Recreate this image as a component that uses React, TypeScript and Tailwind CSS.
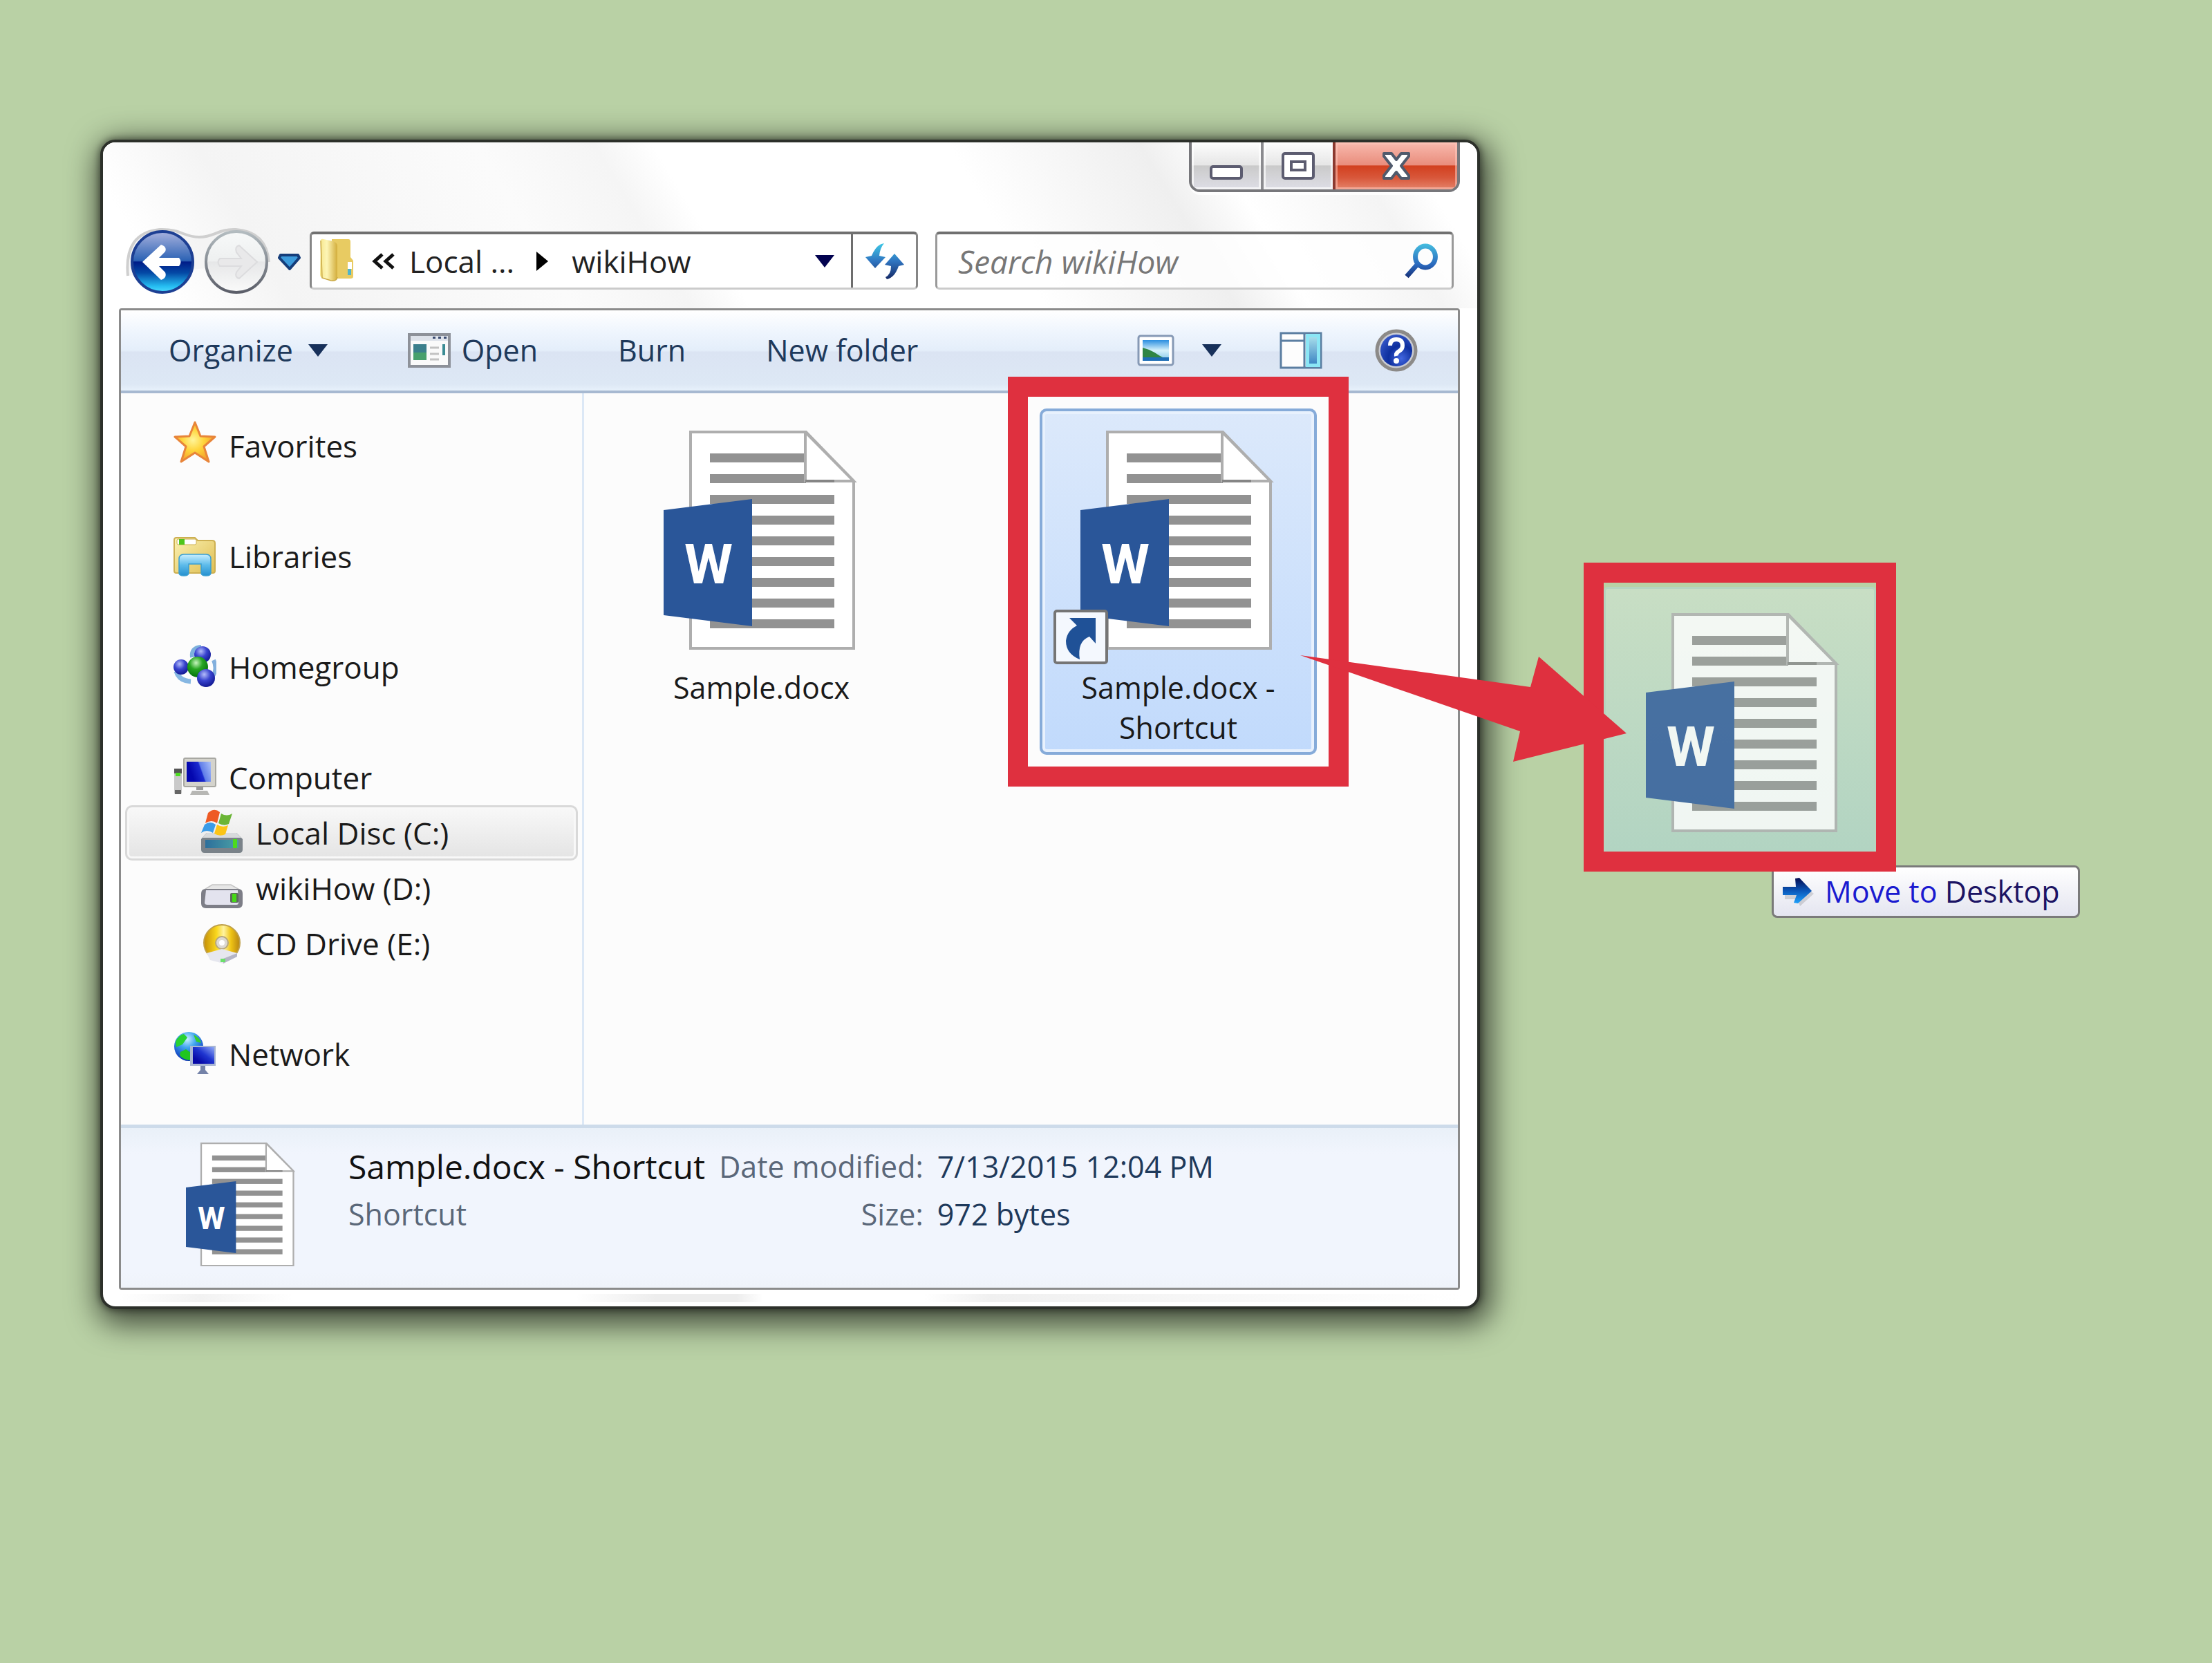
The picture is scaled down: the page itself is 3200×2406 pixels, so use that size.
import React from "react";

const WordIcon = ({ className }: { className: string }) => (
  <svg viewBox="0 0 283 317" className={className}>
    <path d="M39 2H206L275 73V315H39Z" fill="#fff" stroke="#aeaeae" strokeWidth="4" />
    {[33, 63].map((y) => (
      <rect key={y} x="67" y={y} width="139" height="13" fill="#929292" />
    ))}
    {[93, 123, 153, 183, 213, 243, 273].map((y) => (
      <rect key={y} x="67" y={y} width="180" height="13" fill="#929292" />
    ))}
    <path d="M205 2V73H275Z" fill="#fff" stroke="#aeaeae" strokeWidth="4" />
    <path d="M205 73H247" stroke="#858585" strokeWidth="4" />
    <path d="M0 115L128 99V283L0 267Z" fill="#2a5699" />
    <text
      x="65"
      y="221"
      textAnchor="middle"
      fill="#fff"
      fontFamily="Roboto, sans-serif"
      fontWeight="700"
      fontSize="80">
      W
    </text>
  </svg>
);

const Triangle = ({ color }: { color: string }) => (
  <svg viewBox="0 0 28 18" className="w-7 shrink-0">
    <path d="M0 0H28L14 18Z" fill={color} />
  </svg>
);

const StarIcon = () => (
  <svg viewBox="0 0 62 72" className="w-[62px] shrink-0">
    <defs>
      <radialGradient id="star" cx="45%" cy="45%" r="60%">
        <stop offset="0" stopColor="#fff59a" />
        <stop offset="0.45" stopColor="#ffd53c" />
        <stop offset="1" stopColor="#f29a26" />
      </radialGradient>
    </defs>
    <path
      d="M31 2L39 22L60 23L44 37L51 59L31 46L11 59L18 37L2 23L23 22Z"
      fill="url(#star)"
      stroke="#e8853a"
      strokeWidth="3"
      strokeLinejoin="round"
    />
  </svg>
);

const LibrariesIcon = () => (
  <svg viewBox="0 0 62 72" className="w-[62px] shrink-0">
    <defs>
      <linearGradient id="lib" x1="0" y1="0" x2="1" y2="1">
        <stop offset="0" stopColor="#fbf2b4" />
        <stop offset="1" stopColor="#dfbe52" />
      </linearGradient>
      <linearGradient id="libBlue" x1="0" y1="0" x2="0" y2="1">
        <stop offset="0" stopColor="#c9efff" />
        <stop offset="0.5" stopColor="#5dbbea" />
        <stop offset="1" stopColor="#2590cf" />
      </linearGradient>
    </defs>
    <path
      d="M4 9H31L35 13H56Q60 13 60 17V57Q60 60 57 60H4Q1 60 1 57V12Q1 9 4 9Z"
      fill="url(#lib)"
      stroke="#cdb052"
      strokeWidth="2"
    />
    <rect x="5" y="11" width="28" height="8" rx="2" fill="#fff" stroke="#cdb052" />
    <rect x="8" y="11" width="8" height="8" fill="#4fc61c" />
    <path
      d="M8 60V40Q8 33 15 33H47Q54 33 54 40V60Q54 64 47 64Q40 64 40 60V47H22V60Q22 64 15 64Q8 64 8 60Z"
      fill="url(#libBlue)"
      stroke="#3a9fd2"
      strokeWidth="1.5"
    />
  </svg>
);

const HomegroupIcon = () => (
  <svg viewBox="0 0 62 72" className="w-[62px] shrink-0">
    <defs>
      <radialGradient id="ballBlue" cx="40%" cy="30%" r="70%">
        <stop offset="0" stopColor="#b4bdfa" />
        <stop offset="0.5" stopColor="#3944cf" />
        <stop offset="1" stopColor="#131a94" />
      </radialGradient>
      <radialGradient id="ballGreen" cx="42%" cy="30%" r="70%">
        <stop offset="0" stopColor="#c6f5bd" />
        <stop offset="0.45" stopColor="#26a521" />
        <stop offset="1" stopColor="#04700a" />
      </radialGradient>
    </defs>
    <path d="M27 22Q25 8 40 7" fill="none" stroke="#7db1dc" strokeWidth="6" />
    <path d="M58 26Q64 40 56 50" fill="none" stroke="#83b0dd" strokeWidth="6" />
    <path d="M4 42Q8 56 25 57" fill="none" stroke="#86b7e2" strokeWidth="7" />
    <circle cx="42" cy="18" r="12" fill="url(#ballBlue)" />
    <circle cx="11" cy="36" r="11" fill="url(#ballBlue)" />
    <circle cx="35" cy="36" r="15" fill="url(#ballGreen)" />
    <circle cx="47" cy="52" r="13" fill="url(#ballBlue)" />
  </svg>
);

const ComputerIcon = () => (
  <svg viewBox="0 0 62 72" className="w-[62px] shrink-0">
    <defs>
      <linearGradient id="screen" x1="0" y1="0.3" x2="1" y2="0">
        <stop offset="0.1" stopColor="#0407ae" />
        <stop offset="0.5" stopColor="#1c2cd0" />
        <stop offset="0.55" stopColor="#5f7ce8" />
        <stop offset="1" stopColor="#a9c0fa" />
      </linearGradient>
    </defs>
    <rect x="1" y="23" width="11" height="37" rx="2" fill="#c9c9c9" />
    <rect x="1" y="23" width="11" height="7" fill="#555" />
    <rect x="3" y="29" width="7" height="5" fill="#4ddc21" />
    <rect x="2" y="54" width="9" height="6" fill="#666" />
    <rect x="15" y="8" width="46" height="41" rx="2" fill="#d4d3cc" stroke="#a8a8a2" strokeWidth="2" />
    <rect x="19" y="13" width="35" height="29" fill="url(#screen)" />
    <path d="M33 49H43V54H33Z" fill="#9a9a9a" />
    <path d="M27 55H49L52 61H24Z" fill="#b7b7b4" />
  </svg>
);

const LocalDiscIcon = () => (
  <svg viewBox="0 0 62 72" className="w-[62px] shrink-0">
    <defs>
      <linearGradient id="discFace" x1="0" y1="0" x2="1" y2="0">
        <stop offset="0" stopColor="#2c6f9c" />
        <stop offset="1" stopColor="#4ba0a4" />
      </linearGradient>
    </defs>
    <path d="M9 36H52L61 45V60Q61 65 56 65H6Q1 65 1 60V45Z" fill="#7a8289" />
    <path d="M9 36H52L59 43H3Z" fill="#d8dadc" />
    <rect x="7" y="46" width="48" height="12" fill="url(#discFace)" />
    <rect x="47" y="45" width="6" height="13" fill="#4ddb1e" />
    <path d="M11 7Q20 -1 28 6L24 22Q16 16 7 22Z" fill="#ee5a24" />
    <path d="M30 8Q38 13 46 8L41 23Q34 27 26 22Z" fill="#6bb536" />
    <path d="M6 24Q14 18 22 24L18 36Q9 30 1 36Z" fill="#3a9ce8" />
    <path d="M24 24Q32 29 40 25L36 38Q28 42 20 37Z" fill="#fcc416" />
  </svg>
);

const DriveIcon = () => (
  <svg viewBox="0 0 62 72" className="w-[62px] shrink-0">
    <path d="M17 31H44L58 39H4Z" fill="#e6e6e6" stroke="#c4c4c4" strokeWidth="1.5" />
    <path d="M8 37H54Q61 37 61 44V58Q61 65 54 65H8Q1 65 1 58V44Q1 37 8 37Z" fill="#7d7e87" />
    <path d="M8 39H54L55 57Q55 60 52 60H10Q6 60 6 57Z" fill="#e3e3ee" />
    <rect x="43" y="43" width="12" height="14" rx="2" fill="#5c6a5c" />
    <rect x="46" y="44" width="6" height="12" fill="#45d916" />
  </svg>
);

const CdIcon = () => (
  <svg viewBox="0 0 62 72" className="w-[62px] shrink-0">
    <defs>
      <linearGradient id="cd" x1="0" y1="0" x2="1" y2="0">
        <stop offset="0" stopColor="#c58f08" />
        <stop offset="0.35" stopColor="#f9d71c" />
        <stop offset="0.55" stopColor="#fff3a0" />
        <stop offset="0.75" stopColor="#efc414" />
        <stop offset="1" stopColor="#b78410" />
      </linearGradient>
    </defs>
    <circle cx="31" cy="35" r="26" fill="url(#cd)" stroke="#bfa04a" strokeWidth="2" />
    <circle cx="31" cy="35" r="9" fill="#ddd9d2" stroke="#b6a77b" strokeWidth="2" />
    <circle cx="31" cy="35" r="4" fill="#fff" />
    <path d="M9 50L31 44L53 50V55L33 65L14 60Z" fill="#e6e7ef" />
    <path d="M33 58L53 50V55L33 65Z" fill="#b4b5c6" />
    <rect x="29" y="58" width="7" height="5" fill="#6be06b" />
  </svg>
);

const NetworkIcon = () => (
  <svg viewBox="0 0 62 72" className="w-[62px] shrink-0">
    <defs>
      <radialGradient id="globe" cx="45%" cy="25%" r="75%">
        <stop offset="0" stopColor="#c8f0ff" />
        <stop offset="0.4" stopColor="#3ea4ee" />
        <stop offset="1" stopColor="#0a2fb8" />
      </radialGradient>
      <linearGradient id="netScreen" x1="0" y1="1" x2="1" y2="0">
        <stop offset="0.2" stopColor="#0608a6" />
        <stop offset="0.55" stopColor="#1f35d0" />
        <stop offset="1" stopColor="#8fa9f5" />
      </linearGradient>
    </defs>
    <circle cx="22" cy="25" r="21" fill="url(#globe)" />
    <path d="M3 18Q8 8 15 7L20 12L13 22L4 26Z" fill="#27d232" />
    <path d="M29 8Q38 12 40 20L33 18Z" fill="#33cf2c" />
    <path d="M10 33L18 29L25 34V45Q15 45 9 38Z" fill="#20c61f" />
    <path d="M24 24H61V53H24Z" fill="#a9b6d2" />
    <rect x="28" y="26" width="31" height="24" fill="url(#netScreen)" />
    <path d="M39 53H46V59L51 65H34L39 59Z" fill="#7482a8" />
  </svg>
);

const navGroups = [
  [{ label: "Favorites", Icon: StarIcon }],
  [{ label: "Libraries", Icon: LibrariesIcon }],
  [{ label: "Homegroup", Icon: HomegroupIcon }],
  [
    { label: "Computer", Icon: ComputerIcon },
    { label: "Local Disc (C:)", Icon: LocalDiscIcon, child: true, selected: true },
    { label: "wikiHow (D:)", Icon: DriveIcon, child: true },
    { label: "CD Drive (E:)", Icon: CdIcon, child: true },
  ],
  [{ label: "Network", Icon: NetworkIcon }],
];

const WindowButtons = () => (
  <div className="flex h-[72px] w-[392px] overflow-hidden rounded-b-[16px] border-4 border-t-0 border-[#77777b] shadow-[0_4px_0_0_#ffffffcc]">
    <button
      aria-label="Minimize"
      className="flex w-[104px] items-center justify-center border-r-4 border-[#8b8b8f] bg-[linear-gradient(#fdfdfd,#e6e6e6_48%,#cacaca_50%,#dedee6)] shadow-[inset_0_0_0_3px_#ffffffaa]">
      <svg viewBox="0 0 48 40" className="w-12">
        <rect x="2" y="21" width="44" height="17" rx="3" fill="#fff" stroke="#5c5c70" strokeWidth="4" />
      </svg>
    </button>
    <button
      aria-label="Maximize"
      className="flex w-[100px] items-center justify-center bg-[linear-gradient(#fdfdfd,#e6e6e6_48%,#cacaca_50%,#dedee6)] shadow-[inset_0_0_0_3px_#ffffffaa]">
      <svg viewBox="0 0 48 40" className="w-12">
        <rect x="2" y="2" width="44" height="36" rx="3" fill="#fff" stroke="#5c5c70" strokeWidth="4" />
        <rect x="14" y="14" width="20" height="12" fill="#fff" stroke="#5c5c70" strokeWidth="4" />
      </svg>
    </button>
    <button
      aria-label="Close"
      className="flex flex-1 items-center justify-center border-l-4 border-[#8c3a30] bg-[linear-gradient(#f8b9ae,#e98d7c_48%,#d2401f_50%,#d8573a_75%,#e5836a)] shadow-[inset_0_0_0_3px_#ffc9bd88]">
      <svg viewBox="0 0 44 42" className="w-11">
        <path
          d="M4 3H15L22 12L29 3H40V7L29 21L40 35V39H29L22 30L15 39H4V35L15 21L4 7Z"
          fill="#fff"
          stroke="#505a6c"
          strokeWidth="4"
          strokeLinejoin="round"
        />
      </svg>
    </button>
  </div>
);

const TitleArea = () => (
  <header className="rounded-t-[18px] bg-[linear-gradient(59deg,#fff_5%,#f4f4f4_13%,#fbfbfb_32%,#f5f5f5_40%,#fff_44%,#fff_64%,#efefef_77%,#fff_82%,#f4f4f4_91%,#fff_95%)] pb-[27px]">
    <div className="flex justify-end pr-[25px]">
      <WindowButtons />
    </div>
    <div className="mt-[57px] flex h-[84px] items-center pr-[34px] pl-10">
      <div className="relative mt-1 flex shrink-0 gap-[15px]">
        <svg viewBox="0 0 215 104" className="absolute -top-1 -left-2 w-[215px]">
          <path
            d="M4 70Q-2 8 50 3C82 2 84 14 107 14S134 2 160 3Q204 6 208 50"
            fill="#f0f0f088"
            stroke="#cfcfcf"
            strokeWidth="4"
          />
        </svg>
        <button aria-label="Back" className="relative">
          <svg viewBox="0 0 92 92" className="w-[92px]">
            <defs>
              <linearGradient id="back" x1="0" y1="0" x2="0" y2="1">
                <stop offset="0" stopColor="#a9b2de" />
                <stop offset="0.48" stopColor="#2b62b4" />
                <stop offset="0.5" stopColor="#001c88" />
                <stop offset="0.68" stopColor="#0449a5" />
                <stop offset="0.9" stopColor="#25bdf2" />
                <stop offset="1" stopColor="#4fdcff" />
              </linearGradient>
            </defs>
            <circle cx="46" cy="46" r="44" fill="url(#back)" stroke="#1d3f93" strokeWidth="4" />
            <path
              d="M17 46L44 21Q53 24 50 31L41 40H70Q75 46 70 52H41L50 61Q53 69 44 72Z"
              fill="#fff"
            />
          </svg>
        </button>
        <button aria-label="Forward" className="relative">
          <svg viewBox="0 0 92 92" className="w-[92px]">
            <defs>
              <linearGradient id="fwd" x1="0" y1="0" x2="0" y2="1">
                <stop offset="0" stopColor="#f7f9f9" />
                <stop offset="0.48" stopColor="#eef0f0" />
                <stop offset="0.5" stopColor="#e6e7e8" />
                <stop offset="1" stopColor="#fafafa" />
              </linearGradient>
              <linearGradient id="fwdEdge" x1="0" y1="0" x2="0" y2="1">
                <stop offset="0" stopColor="#b3bcc0" />
                <stop offset="1" stopColor="#5a5d68" />
              </linearGradient>
            </defs>
            <circle cx="46" cy="46" r="44" fill="url(#fwd)" stroke="url(#fwdEdge)" strokeWidth="4" />
            <path
              d="M76 46L50 70Q43 68 46 61L53 52H22Q17 46 22 41H53L46 32Q43 24 50 22Z"
              fill="#e9e9ea"
              stroke="#dcdcde"
              strokeWidth="2"
            />
          </svg>
        </button>
      </div>
      <button aria-label="Recent pages" className="mt-1 mr-[13px] ml-[14px] shrink-0">
        <svg viewBox="0 0 33 24" className="w-[33px]">
          <path d="M4 2H29L31 6L17 22L2 6Z" fill="#3c9bdc" stroke="#153d7a" strokeWidth="4" strokeLinejoin="round" />
        </svg>
      </button>

      <div className="flex h-full flex-1 items-center rounded-[6px] border-[3px] border-t-4 border-[#868686] border-t-[#707070] border-b-[#cbcbcb] bg-white pl-[11px] text-[44px] leading-[60px] text-[#222]">
        <svg viewBox="0 0 50 62" className="mb-1 w-[50px] shrink-0">
          <defs>
            <linearGradient id="folder" x1="0" y1="0" x2="1" y2="0">
              <stop offset="0" stopColor="#f7e78d" />
              <stop offset="0.4" stopColor="#fdf5b6" />
              <stop offset="1" stopColor="#d3ad3b" />
            </linearGradient>
          </defs>
          <path d="M18 1H42Q45 1 45 5V27L49 32V55Q49 58 45 58H18Z" fill="#e8cb62" />
          <path d="M2 3Q2 0 6 1L20 4Q26 6 26 11V58Q24 63 17 61L4 57Q1 56 1 52Z" fill="url(#folder)" />
          <path d="M2 3L4 57L17 61Q25 62 26 56" fill="none" stroke="#c9a845" strokeWidth="1.5" />
          <rect x="41" y="34" width="6" height="10" fill="#fff" />
          <rect x="41" y="44" width="5" height="9" fill="#4fb4c9" />
        </svg>
        <button aria-label="Parent folders" className="mr-5 ml-[26px]">
          <svg viewBox="0 0 34 24" className="w-[34px]">
            <path d="M15 2L4 12L15 22M31 2L20 12L31 22" fill="none" stroke="#111" strokeWidth="5" />
          </svg>
        </button>
        <button>Local ...</button>
        <svg viewBox="0 0 17 28" className="mr-[34px] ml-8 w-[17px] shrink-0">
          <path d="M0 0L17 14L0 28Z" fill="#000" />
        </svg>
        <button>wikiHow</button>
        <button aria-label="Previous locations" className="mr-6 ml-auto">
          <Triangle color="#02024f" />
        </button>
        <button
          aria-label="Refresh"
          className="flex h-full w-[94px] shrink-0 items-center justify-center border-l-[3px] border-[#6d6d6d]">
          <svg viewBox="0 0 56 52" className="w-14">
            <defs>
              <linearGradient id="refresh" x1="0" y1="0" x2="0" y2="52" gradientUnits="userSpaceOnUse">
                <stop offset="0" stopColor="#3ec8e6" />
                <stop offset="0.5" stopColor="#2f74c0" />
                <stop offset="1" stopColor="#152a66" />
              </linearGradient>
            </defs>
            <path d="M27 0Q16 1 9 18L0 20L14 36L29 20L20 18Q21 7 27 0Z" fill="url(#refresh)" />
            <path d="M31 52Q42 50 48 33L56 31L42 15L28 31L37 33Q37 45 29 49Z" fill="url(#refresh)" />
          </svg>
        </button>
      </div>

      <label className="ml-[25px] flex h-full w-[750px] items-center rounded-[6px] border-[3px] border-t-4 border-[#999] border-t-[#707070] border-b-[#cbcbcb] bg-white/80 pr-[20px] pl-[30px]">
        <input
          type="search"
          aria-label="Search wikiHow"
          placeholder="Search wikiHow"
          className="min-w-0 flex-1 bg-transparent text-[46px] leading-[60px] outline-none placeholder:text-[#777] placeholder:italic"
        />
        <svg viewBox="0 0 48 52" className="w-12 shrink-0">
          <defs>
            <linearGradient id="glass" x1="0" y1="0" x2="0" y2="52" gradientUnits="userSpaceOnUse">
              <stop offset="0" stopColor="#45bfe0" />
              <stop offset="0.6" stopColor="#2a68bd" />
              <stop offset="1" stopColor="#14296e" />
            </linearGradient>
          </defs>
          <path
            d="M18 31L3 48M30 4A14 15 0 1 0 30 35A14 15 0 1 0 30 4Z"
            fill="none"
            stroke="url(#glass)"
            strokeWidth="7"
          />
        </svg>
      </label>
    </div>
  </header>
);

const Toolbar = () => (
  <div className="flex h-[120px] items-center border-b-4 border-[#a7b9d1] bg-[linear-gradient(#fff,#edf4fd_30%,#e4eefa_50%,#dbe4f3_52%,#dde8f5_92%,#e7f1fb)] pr-[58px] pl-[69px] text-[#1e395b]">
    <div className="flex items-center gap-[116px]">
      <button className="flex items-center gap-[22px]">
        Organize <Triangle color="#17305a" />
      </button>
      <button className="flex items-center gap-4">
        <svg viewBox="0 0 62 50" className="w-[62px]">
          <rect x="2" y="2" width="58" height="46" fill="#fafafa" stroke="#8d9199" strokeWidth="4" />
          <rect x="4" y="4" width="54" height="7" fill="#dde2ea" />
          <path d="M38 5V8M46 5V8M54 5V8" stroke="#394a70" strokeWidth="4" />
          <rect x="8" y="16" width="19" height="23" fill="#3b7f8c" />
          <rect x="8" y="28" width="19" height="11" fill="#48a06c" />
          <path d="M32 21H45M32 30H45M32 38H45" stroke="#c2c2c2" strokeWidth="3" />
          <rect x="50" y="16" width="4" height="16" fill="#3b8c94" />
        </svg>
        Open
      </button>
      <button>Burn</button>
      <button>New folder</button>
    </div>
    <div className="ml-auto flex items-center">
      <button aria-label="Change your view" className="mr-10">
        <svg viewBox="0 0 54 46" className="w-[54px]">
          <defs>
            <linearGradient id="sky" x1="0" y1="0" x2="0" y2="1">
              <stop offset="0" stopColor="#2b8ee0" />
              <stop offset="0.5" stopColor="#d7f2fb" />
              <stop offset="1" stopColor="#7ec4e8" />
            </linearGradient>
          </defs>
          <rect x="2" y="2" width="50" height="42" rx="3" fill="#fff" stroke="#8699b5" strokeWidth="3" />
          <rect x="8" y="8" width="38" height="30" fill="url(#sky)" />
          <path d="M8 19Q20 22 30 29T46 33V34H8Z" fill="#2f8544" />
          <rect x="8" y="33" width="38" height="5" fill="#1f6fb6" />
        </svg>
      </button>
      <button aria-label="More view options" className="mr-[84px]">
        <Triangle color="#17305a" />
      </button>
      <button aria-label="Show the preview pane" className="mr-[76px]">
        <svg viewBox="0 0 62 54" className="w-[62px]">
          <defs>
            <linearGradient id="pane" x1="0" y1="0" x2="0" y2="1">
              <stop offset="0" stopColor="#a5dcea" />
              <stop offset="1" stopColor="#3f87c4" />
            </linearGradient>
          </defs>
          <rect x="2" y="2" width="58" height="50" fill="#fdfdfd" stroke="#5b7ea1" strokeWidth="3" />
          <path d="M2 13H36M36 2V52" stroke="#5b7ea1" strokeWidth="3" />
          <rect x="38" y="3" width="21" height="48" fill="#8be6f5" />
          <rect x="43" y="8" width="11" height="38" fill="url(#pane)" />
        </svg>
      </button>
      <button aria-label="Get help">
        <svg viewBox="0 0 62 62" className="w-[62px]">
          <defs>
            <radialGradient id="help" cx="65%" cy="75%" r="80%">
              <stop offset="0" stopColor="#4267e0" />
              <stop offset="0.5" stopColor="#0e2f9e" />
              <stop offset="1" stopColor="#3557c8" />
            </radialGradient>
          </defs>
          <circle cx="31" cy="31" r="28" fill="#c9cbd2" stroke="#8c8a88" strokeWidth="5" />
          <circle cx="31" cy="31" r="23" fill="url(#help)" />
          <path d="M22 24Q22 15 31 15T40 24Q40 29 35 32T31 39" fill="none" stroke="#fff" strokeWidth="6" />
          <circle cx="31" cy="46" r="4" fill="#fff" />
        </svg>
      </button>
    </div>
  </div>
);

const Sidebar = () => (
  <nav className="flex w-[670px] shrink-0 flex-col gap-20 border-r-[3px] border-[#dce8f6] px-1.5 pt-9 pb-[62px] text-[44px] text-[#1a1a1a]">
    {navGroups.map((group, index) => (
      <div key={index}>
        {group.map((i: any) => (
          <button
            key={i.label}
            className={`flex h-20 w-full items-center gap-[18px] rounded-[10px] ${
              i.child ? "pl-[109px]" : "pl-[70px]"
            } ${
              i.selected
                ? "bg-[linear-gradient(#f9f9f9,#e3e3e3)] shadow-[inset_0_0_0_3px_#d9d9d9,inset_0_0_0_6px_#f8f8f8]"
                : ""
            }`}>
            <i.Icon />
            {i.label}
          </button>
        ))}
      </div>
    ))}
  </nav>
);

const Files = () => (
  <main className="flex flex-1 items-start gap-[202px] pt-[22px] pl-14">
    <button className="flex w-[401px] flex-col items-center gap-[26px] px-4 pt-8 pb-2.5 leading-[58px] text-[#1a1a1a]">
      <WordIcon className="w-[283px]" />
      <span>Sample.docx</span>
    </button>
    <div className="relative">
      <button className="flex w-[401px] flex-col items-center gap-[26px] rounded-[10px] bg-[linear-gradient(#dce9fb,#c1dafc)] px-4 pt-8 pb-2.5 leading-[58px] text-[#1a1a1a] shadow-[inset_0_0_0_4px_#86abd9,inset_0_0_0_8px_#e8f1fd]">
        <WordIcon className="w-[283px]" />
        <span>
          Sample.docx -
          <br />
          Shortcut
        </span>
      </button>
      {/* shortcut badge */}
      <svg viewBox="0 0 79 79" className="absolute top-[291px] left-5 w-[79px]">
        <rect x="2" y="2" width="75" height="75" rx="3" fill="#f4f8fe" stroke="#757575" strokeWidth="4" />
        <path d="M23 12H61V49L52 39Q34 46 38 72Q18 64 18 45Q20 30 34 23Z" fill="#1f5197" />
      </svg>
      <div className="absolute -inset-[46px] border-[29px] border-[#df303f]" />
    </div>
  </main>
);

const DetailsPane = () => (
  <footer className="flex items-start gap-[75px] border-t-[5px] border-[#cddbea] bg-[linear-gradient(#e9f0f8,#f1f5fd_16%,#f1f5fd_90%,#eff3fa)] pt-[21px] pb-[31px] pl-[94px]">
    <WordIcon className="w-[160px]" />
    <div className="grid grid-cols-[auto_auto_auto] gap-x-5 leading-[69px] whitespace-nowrap text-[#5a6779]">
      <span className="text-[48px] text-[#111]">Sample.docx - Shortcut</span>
      <span className="text-right">Date modified:</span>
      <span className="text-[#1e395b]">7/13/2015 12:04 PM</span>
      <span>Shortcut</span>
      <span className="text-right">Size:</span>
      <span className="text-[#1e395b]">972 bytes</span>
    </div>
  </footer>
);

const ExplorerWindow = () => (
  <section className="flex-1 rounded-[22px] border-4 border-[#2c302a] bg-white shadow-[0_0_10px_2px_#00000066,6px_12px_44px_10px_#000000a6]">
    <TitleArea />
    <div className="mx-[23px] mr-[25px] rounded-[4px] border-[3px] border-[#8b8b8b] bg-[#fcfcfc]">
      <Toolbar />
      <div className="flex">
        <Sidebar />
        <Files />
      </div>
      <DetailsPane />
    </div>
    <div className="mx-6 my-1.5 h-3 bg-[linear-gradient(90deg,#fff,#f2f2f2_6%,#fff_13%,#fff_34%,#ededed_40%,#ededed_46%,#fff_48%,#fff_60%,#f0f0f0_65%,#fff)]" />
  </section>
);

const DragTarget = () => (
  <div className="w-[718px] shrink-0 pt-[612px]">
    <div className="relative z-10 w-[452px]">
      <div className="border-[29px] border-[#df303f] pt-1.5">
        <div className="rounded-t-[6px] border-[3px] border-b-0 border-[#b5d5c0] bg-[linear-gradient(#c8dec4,#b2d4c2)] pt-[35px] pb-[28px] pl-[58px]">
          <WordIcon className="w-[283px] opacity-80" />
        </div>
      </div>
      <svg viewBox="0 0 472 154" className="absolute top-[134px] left-[-410px] w-[472px]">
        <path d="M0 0L333 46L345 2L472 113L308 154L318 110Z" fill="#df303f" />
      </svg>
    </div>
    <div className="-mt-[9px] ml-[272px] flex h-[76px] items-center gap-4 rounded-[8px] border-[3px] border-[#7a7a7a] bg-[linear-gradient(#fff,#e4e5f0)] pl-3 whitespace-nowrap text-[#1c1464]">
      <svg viewBox="0 0 46 44" className="w-[46px] shrink-0">
        <defs>
          <linearGradient id="move" x1="0" y1="0" x2="0" y2="1">
            <stop offset="0" stopColor="#050a4e" />
            <stop offset="0.5" stopColor="#0a56b8" />
            <stop offset="1" stopColor="#1fa0fa" />
          </linearGradient>
        </defs>
        <path d="M4 19H22L24 7L46 25L26 43L22 33H4Z" fill="#00000022" />
        <path d="M1 15H20L19 3L25 2L43 21L23 39L17 38L21 27H1Z" fill="url(#move)" />
      </svg>
      <span>
        <span className="text-[#1a1ad0]">Move to</span> Desktop
      </span>
    </div>
  </div>
);

const App = () => {
  return (
    <div className="flex min-h-screen items-start gap-[150px] bg-[#b9d1a5] pt-[202px] pr-[191px] pb-20 pl-[145px] font-['Open_Sans','Noto_Sans',sans-serif] text-[43px] leading-[60px]">
      <ExplorerWindow />
      <DragTarget />
    </div>
  );
};

export default App;
